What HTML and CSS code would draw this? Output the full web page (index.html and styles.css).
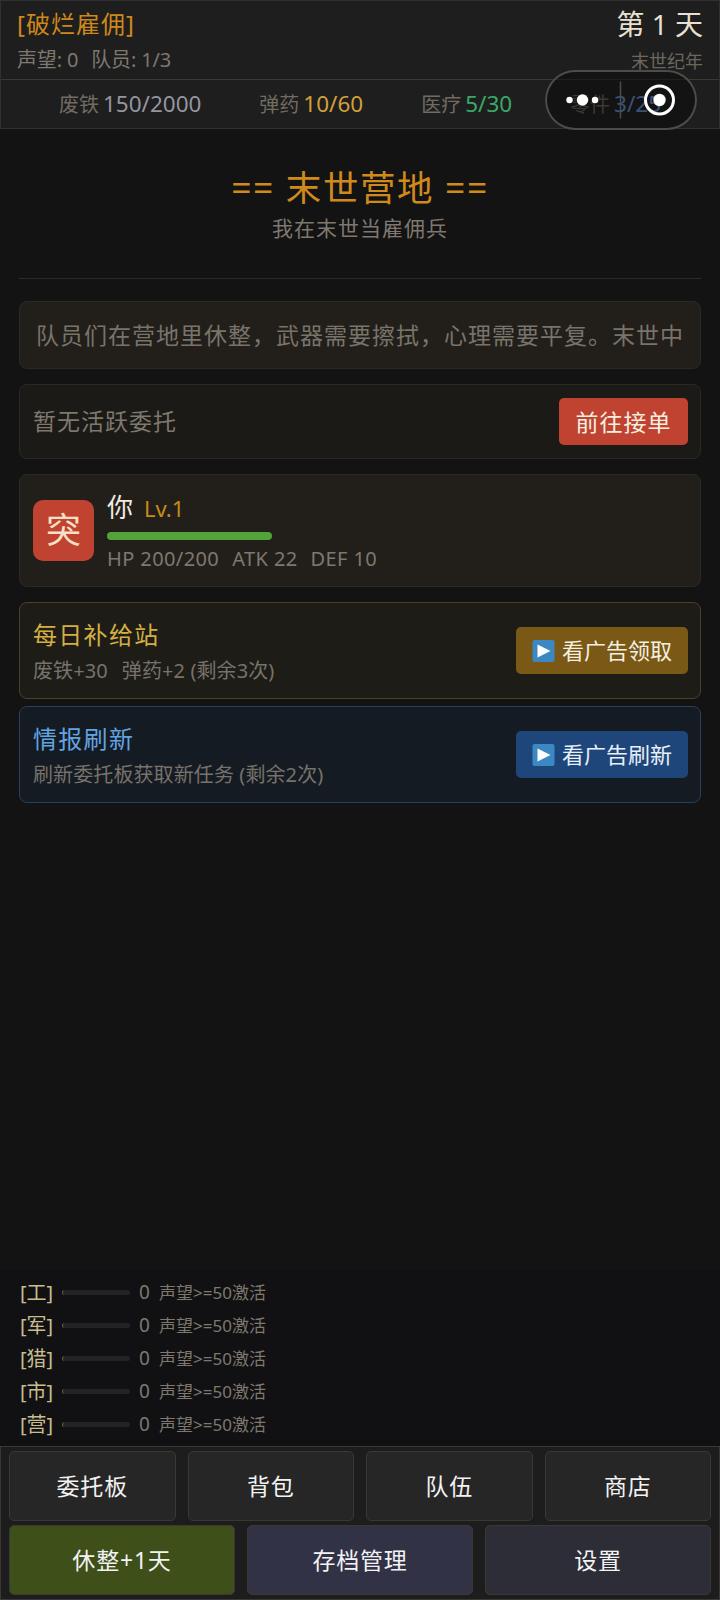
FILE: index.html
```html
<!DOCTYPE html>
<html lang="zh-CN">
<head>
<meta charset="utf-8">
<title>末世营地</title>
<link rel="stylesheet" href="styles.css">
</head>
<body>
<div class="app">
  <header class="top">
    <div class="status">
      <div class="status-left">
        <div class="rank">[破烂雇佣]</div>
        <div class="meta"><span>声望: 0</span><span>队员: 1/3</span></div>
      </div>
      <div class="status-right">
        <div class="day">第 1 天</div>
        <div class="era">末世纪年</div>
      </div>
    </div>
    <div class="resources">
      <div class="res"><span class="res-name">废铁</span><span class="scrap">150/2000</span></div>
      <div class="res"><span class="res-name">弹药</span><span class="ammo">10/60</span></div>
      <div class="res"><span class="res-name">医疗</span><span class="med">5/30</span></div>
      <div class="res"><span class="res-name">零件</span><span class="parts">3/25</span></div>
    </div>
    <div class="capsule">
      <svg width="152" height="60" viewBox="0 0 152 60">
        <g fill="#fff">
          <circle cx="24.5" cy="30" r="3.2"/><circle cx="37.5" cy="30" r="5.7"/><circle cx="50" cy="30" r="3.2"/>
          <circle cx="114.5" cy="30" r="6.2"/>
        </g>
        <circle cx="114.5" cy="30" r="14" fill="none" stroke="#fff" stroke-width="3"/>
        <path d="M75.5 11.500v37" stroke="#4c4c4c" stroke-width="1.500"/>
      </svg>
    </div>
  </header>

  <main class="camp">
    <div class="hero">
      <h1 class="title">== 末世营地 ==</h1>
      <div class="subtitle">我在末世当雇佣兵</div>
    </div>
    <div class="card ticker">队员们在营地里休整，武器需要擦拭，心理需要平复。末世中</div>
    <div class="card contract">
      <span class="contract-text">暂无活跃委托</span>
      <button class="btn btn-red">前往接单</button>
    </div>
    <div class="card member">
      <div class="avatar">突</div>
      <div class="member-info">
        <div class="member-name">你<span class="level">Lv.1</span></div>
        <div class="hp"></div>
        <div class="stats"><span>HP 200/200</span><span>ATK 22</span><span>DEF 10</span></div>
      </div>
    </div>
    <div class="card offer supply">
      <div class="offer-info">
        <div class="offer-title">每日补给站</div>
        <div class="offer-desc"><span>废铁+30</span><span>弹药+2 (剩余3次)</span></div>
      </div>
      <button class="btn btn-ad"><svg class="play" viewBox="0 0 22 22"><rect width="22" height="22" rx="2" fill="#3b88c3"/><path d="M5 4.500l13 6.500-13 6.500z" fill="#fff"/></svg>看广告领取</button>
    </div>
    <div class="card offer intel">
      <div class="offer-info">
        <div class="offer-title">情报刷新</div>
        <div class="offer-desc"><span>刷新委托板获取新任务 (剩余2次)</span></div>
      </div>
      <button class="btn btn-ad"><svg class="play" viewBox="0 0 22 22"><rect width="22" height="22" rx="2" fill="#3b88c3"/><path d="M5 4.500l13 6.500-13 6.500z" fill="#fff"/></svg>看广告刷新</button>
    </div>
  </main>

  <section class="factions">
    <div class="faction"><span class="tag">[工]</span><i class="track"></i><span class="value">0</span><span class="hint">声望&gt;=50激活</span></div>
    <div class="faction"><span class="tag">[军]</span><i class="track"></i><span class="value">0</span><span class="hint">声望&gt;=50激活</span></div>
    <div class="faction"><span class="tag">[猎]</span><i class="track"></i><span class="value">0</span><span class="hint">声望&gt;=50激活</span></div>
    <div class="faction"><span class="tag">[市]</span><i class="track"></i><span class="value">0</span><span class="hint">声望&gt;=50激活</span></div>
    <div class="faction"><span class="tag">[营]</span><i class="track"></i><span class="value">0</span><span class="hint">声望&gt;=50激活</span></div>
  </section>

  <nav class="nav">
    <div class="nav-row">
      <button class="nav-btn">委托板</button>
      <button class="nav-btn">背包</button>
      <button class="nav-btn">队伍</button>
      <button class="nav-btn">商店</button>
    </div>
    <div class="nav-row">
      <button class="nav-btn rest">休整+1天</button>
      <button class="nav-btn save">存档管理</button>
      <button class="nav-btn settings">设置</button>
    </div>
  </nav>
</div>
</body>
</html>
```

FILE: styles.css
```css
* { box-sizing: border-box; }
body {
  margin: 0;
  background: #131313;
  color: #7e786e;
  font-family: "Noto Sans", "Noto Sans CJK SC", sans-serif;
  font-weight: 400;
}
button { font: inherit; border: 0; padding: 0; margin: 0; }
.app { width: 720px; height: 1600px; display: flex; flex-direction: column; overflow: hidden; }

.top { position: relative; height: 129px; background: #1e1e1e; border: 1px solid #30302e; }
.status {
  height: 79px; padding: 5px 16px 0; display: flex; justify-content: space-between;
  border-bottom: 1px solid #3a3936;
}
.rank { font-size: 24px; line-height: 35px; letter-spacing: 1px; color: #cd881c; }
.meta { display: flex; gap: 13px; font-size: 20px; line-height: 38px; letter-spacing: -.15px; }
.status-right { text-align: right; }
.day { font-size: 28px; line-height: 37px; color: #e8e0d0; }
.era { font-size: 18px; line-height: 37px; color: #6c675e; }
.resources { height: 48px; display: flex; justify-content: space-evenly; align-items: center; }
.res { display: flex; align-items: baseline; gap: 4px; font-size: 22.5px; line-height: 48px; }
.res-name { font-size: 20px; color: #716b61; }
.scrap { color: #95959f; }
.ammo { color: #d2a03a; }
.med { color: #3aa866; }
.parts { color: #6a9ce4; }
.capsule {
  position: absolute; right: 22px; top: 69px; width: 152px; height: 60px;
  border-radius: 30px; background: rgba(8, 8, 8, .5); box-shadow: inset 0 0 0 2px #4c4c4c;
}
.capsule svg { display: block; }

.camp { flex: 1; padding: 0 19px; display: flex; flex-direction: column; }
.hero { height: 150px; padding-top: 34px; margin-bottom: 22px; text-align: center; border-bottom: 1px solid #292929; }
.title { margin: 0; font-size: 35.5px; font-weight: 400; line-height: 48px; letter-spacing: 1.600px; color: #d08a1c; }
.subtitle { font-size: 21px; line-height: 34px; letter-spacing: 1px; }
.card { border: 1px solid #2b2924; border-radius: 8px; background: #221f1b; }
.ticker {
  height: 68px; margin-bottom: 15px; padding: 0 16px; font-size: 23px; line-height: 66px;
  letter-spacing: 1px; white-space: nowrap; overflow: hidden; color: #79736a;
}
.contract {
  height: 75px; margin-bottom: 15px; padding: 0 12px 0 13px; display: flex; align-items: center;
  justify-content: space-between; background: #1b1a16; font-size: 23px; letter-spacing: 1px;
}
.contract-text { padding-bottom: 3px; }
.btn {
  height: 47px; border-radius: 5px; color: #f5efe0; font-size: 22px; line-height: 44px;
  display: flex; align-items: center; justify-content: center; white-space: nowrap;
}
.btn-red { width: 129px; background: #bf4330; font-size: 23px; letter-spacing: 1px; }
.member { height: 113px; margin-bottom: 15px; padding: 0 13px; display: flex; align-items: center; gap: 13px; }
.avatar {
  width: 61px; height: 61px; border-radius: 10px; background: #bf4330; color: #f7e0c4;
  font-size: 35px; line-height: 59px; text-align: center;
}
.member-name { font-size: 26px; line-height: 40px; color: #f0ebe0; }
.level { margin-left: 11px; font-size: 22px; color: #c88a18; }
.hp { width: 165px; height: 8px; border-radius: 4px; background: #52a338; margin: 4px 0 3px; }
.stats { display: flex; gap: 13px; font-size: 20px; line-height: 32px; letter-spacing: .4px; }
.offer { height: 97px; padding: 0 12px 0 13px; display: flex; align-items: center; justify-content: space-between; }
.offer-info { padding-top: 3px; }
.offer-title { font-size: 24px; line-height: 36px; letter-spacing: 1.3px; padding-top: 1px; }
.offer-desc { display: flex; gap: 14px; font-size: 20px; line-height: 36px; letter-spacing: .1px; color: #77726a; }
.supply { margin-bottom: 7px; background: #1e1c17; border-color: #4b4225; }
.supply .offer-title { color: #d3ae42; }
.intel { background: #151b22; border-color: #284059; }
.intel .offer-title { color: #62a4e2; }
.btn-ad { width: 172px; background: #795915; gap: 7px; line-height: 43px; }
.intel .btn-ad { background: #1f467b; color: #e8f0fa; }
.play { width: 23px; height: 22px; }

.factions { height: 176px; padding: 6px 20px 0; background: #111113; }
.faction { height: 33px; display: flex; align-items: center; }
.tag { width: 42px; font-size: 20px; line-height: 31px; color: #c9bd90; }
.track { width: 68px; height: 5px; margin-bottom: 1px; border-radius: 3px; background: #232325; border-left: 1px solid #6a6142; }
.value { width: 29px; padding-left: 9px; font-size: 19px; line-height: 31px; }
.hint { font-size: 17px; line-height: 31px; }

.nav { height: 154px; padding: 4px 8px 0; background: #1d1d1d; border: 1px solid #3a3936; display: flex; flex-direction: column; gap: 4px; }
.nav-row { display: flex; gap: 12px; }
.nav-btn {
  flex: 1; height: 70px; border: 1px solid #393832; border-radius: 5px; background: #262626;
  color: #f2f2f2; font-size: 23px; letter-spacing: .8px; line-height: 66px;
}
.rest { background: #3e4f1a; }
.save { background: #323247; }
.settings { background: #2d2d37; }
```
